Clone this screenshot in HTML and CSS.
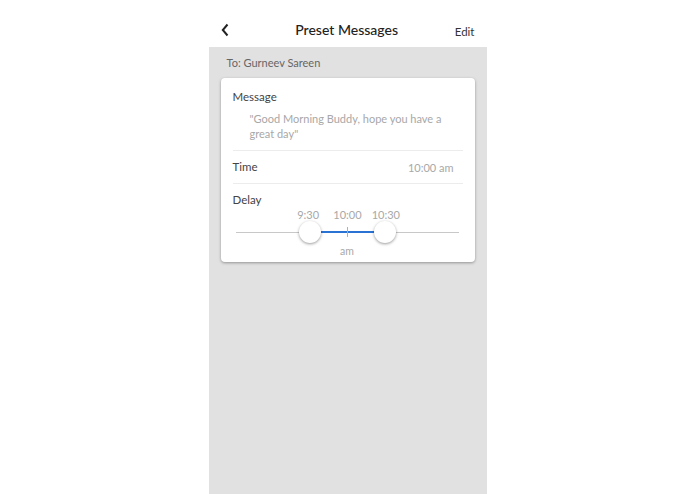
FILE: index.html
```html
<!DOCTYPE html>
<html lang="en">
<head>
    <meta charset="UTF-8">
    <meta name="viewport" content="width=device-width, initial-scale=1.0">
    <title>Preset Messages</title>
    <link rel="stylesheet" href="styles.css">
</head>
<body>

    <div class="phone">
        <!-- Top bar -->
        <div class="topbar">
            <a href="#" class="back">
                <svg width="8" height="14" viewBox="0 0 8 14">
                    <path d="M6.5 1.5 L1.8 7 L6.5 12.5" fill="none" stroke="#222" stroke-width="2"/>
                </svg>
            </a>
            <h1>Preset Messages</h1>
            <a href="#" class="edit">Edit</a>
        </div>

        <div class="recipient">To: Gurneev Sareen</div>

        <!-- Message card -->
        <div class="card">
            <div class="section message">
                <p class="label">Message</p>
                <p class="quote">"Good Morning Buddy, hope you have a great day"</p>
            </div>

            <div class="section row">
                <p class="label">Time</p>
                <p class="value">10:00 am</p>
            </div>

            <div class="section delay">
                <p class="label">Delay</p>
                <div class="slider">
                    <div class="ticks">
                        <span style="left: 32.6%">9:30</span>
                        <span style="left: 50.2%">10:00</span>
                        <span style="left: 67.4%">10:30</span>
                    </div>
                    <div class="track">
                        <div class="range" style="left: 33.2%; width: 33.8%"></div>
                        <div class="tick" style="left: 50.2%"></div>
                        <div class="thumb" style="left: 33.2%"></div>
                        <div class="thumb" style="left: 67%"></div>
                    </div>
                    <p class="unit">am</p>
                </div>
            </div>
        </div>
    </div>

</body>
</html>
```

FILE: styles.css
```css
* {
    margin: 0;
    padding: 0;
    box-sizing: border-box;
    font-family: 'Lato', 'Open Sans', sans-serif;
}
body {
    background: #fff;
}

.phone {
    width: 278px;
    height: 494px;
    margin: 0 auto;
    background: #e1e1e1;
    overflow: hidden;
}

/* top bar */
.topbar {
    height: 47px;
    background: #fff;
    padding: 12px 12px 0 12px;
    display: flex;
    align-items: center;
    justify-content: space-between;
}
.topbar h1 {
    font-size: 14px;
    font-weight: 500;
    color: #222;
    margin-left: -2px;
}
.back {
    display: flex;
    width: 20px;
}
.edit {
    color: #333;
    text-decoration: none;
    font-size: 11.5px;
    padding-top: 4px;
}

.recipient {
    height: 31px;
    line-height: 31px;
    padding-left: 18px;
    font-size: 11px;
    color: #666;
}

/* card */
.card {
    margin: 0 12px;
    background: #fff;
    border-radius: 4px;
    box-shadow: 0 1px 3px rgba(0, 0, 0, 0.35);
    padding: 0 12px;
}
.section {
    border-bottom: 1px solid #ececec;
}
.section:last-child {
    border-bottom: none;
}
.label {
    font-size: 11.5px;
    line-height: 14px;
    color: #444;
}

.message {
    padding: 12px 0 9px 0;
}
.quote {
    margin: 7px 0 0 17px;
    font-size: 11px;
    line-height: 15px;
    color: #a8a8a8;
    padding-right: 10px;
}

.row {
    height: 33px;
    display: flex;
    align-items: center;
    justify-content: space-between;
}
.value {
    font-size: 11px;
    color: #a8a8a8;
    padding-right: 9px;
}

.delay {
    padding: 9px 0 4px 0;
}
.slider {
    margin: 0 4px 0 3px;
}
.ticks {
    position: relative;
    height: 13px;
    margin-top: 1px;
}
.ticks span {
    position: absolute;
    top: 0;
    transform: translateX(-50%);
    font-size: 11px;
    line-height: 13px;
    color: #a8a8a8;
}
.track {
    position: relative;
    height: 22px;
}
.track::before {
    content: "";
    position: absolute;
    left: 0;
    right: 0;
    top: 10.5px;
    height: 1px;
    background: #c8c8c8;
}
.range {
    position: absolute;
    top: 10px;
    height: 2px;
    background: #2a72d4;
}
.tick {
    position: absolute;
    top: 6px;
    width: 1px;
    height: 10px;
    background: #b0b0b0;
}
.thumb {
    position: absolute;
    top: 0;
    width: 22px;
    height: 22px;
    margin-left: -11px;
    border-radius: 50%;
    background: #fff;
    box-shadow: 0 1px 3px rgba(0, 0, 0, 0.4);
}
.unit {
    margin-top: 2px;
    text-align: center;
    font-size: 10.5px;
    line-height: 13px;
    color: #a8a8a8;
}
```
